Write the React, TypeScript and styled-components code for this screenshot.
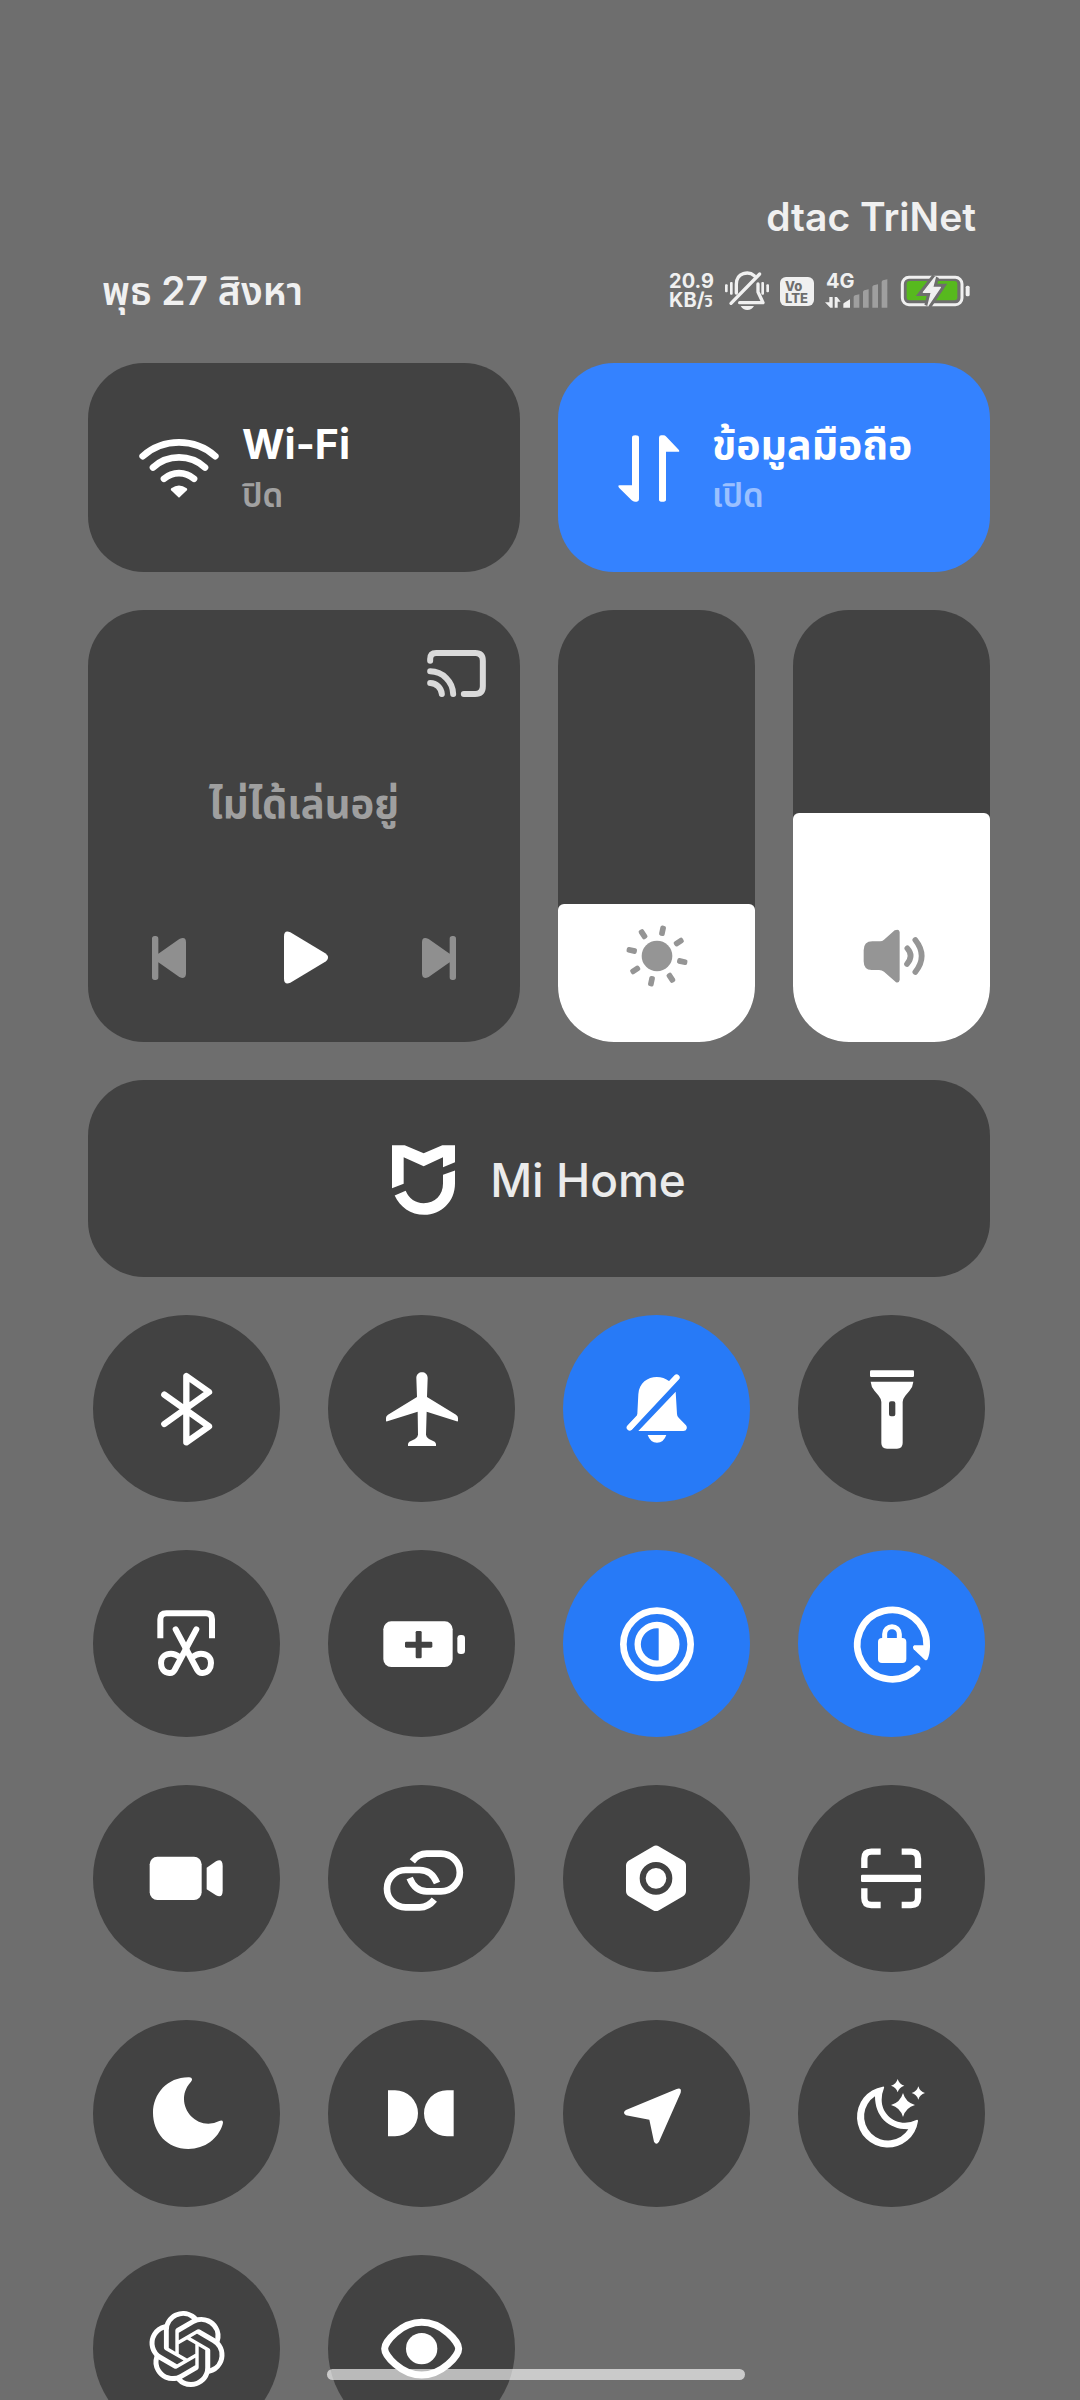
import React, { useState } from "react";
import styled, { createGlobalStyle } from "styled-components";
import { SiOpenai } from "react-icons/si";

const color = {
  page: "#6e6e6e",
  card: "#424242",
  cardOn: "#3482ff",
  tileOn: "#277af7",
  status: "#f0f0f0",
  muted: "#9f9f9f",
  slider: "#959595",
};

const GlobalStyle = createGlobalStyle`
  * { box-sizing: border-box; }
  body { margin: 0; background: ${color.page}; }
  button { font: inherit; color: inherit; border: 0; padding: 0; margin: 0; background: none; cursor: pointer; }
  svg { display: block; flex: none; overflow: visible; }
`;

const Page = styled.div`
  height: 100vh;
  overflow: hidden;
  padding: 193px 90px 0 88px;
  background: ${color.page};
  color: #fff;
  font-family: Inter, "Noto Sans Thai", "Noto Sans", sans-serif;
`;

const Header = styled.header`
  display: flex;
  flex-direction: column;
  gap: 26px;
  padding: 0 14px;
  margin-bottom: 48px;
  color: ${color.status};
  font-size: 39px;
  line-height: 48px;
  font-weight: 600;
`;

const Carrier = styled.div`
  text-align: right;
`;

const StatusRow = styled.div`
  display: flex;
  justify-content: space-between;
  align-items: center;
`;

const StatusIcons = styled.div`
  display: flex;
  align-items: center;
  gap: 11px;
  padding-right: 6px;
`;

const Speed = styled.div`
  display: flex;
  flex-direction: column;
  font-size: 20px;
  line-height: 19px;
  font-weight: 700;
`;

const SpeedUnit = styled.span`
  font-size: 16px;
  line-height: 16px;
`;

const VoLte = styled.div`
  width: 34px;
  height: 29px;
  padding: 3px 0 0 5px;
  border-radius: 6px;
  background: ${color.status};
  color: ${color.page};
  font-size: 13px;
  line-height: 12px;
  font-weight: 800;
`;

const Signal = styled.div`
  position: relative;
  margin-right: 3px;
`;

const Network = styled.span`
  position: absolute;
  left: 1px;
  top: -3px;
  font-size: 20px;
  line-height: 20px;
  font-weight: 700;
`;

const Panel = styled.main`
  display: grid;
  grid-template-columns: repeat(4, minmax(0, 1fr));
  gap: 38px;
`;

const WideCard = styled.button<{ $on?: boolean }>`
  grid-column: span 2;
  display: flex;
  align-items: center;
  gap: 23px;
  height: 209px;
  padding: 2px 51px 0;
  border-radius: 56px;
  text-align: left;
  background: ${(p) => (p.$on ? color.cardOn : color.card)};
`;

const CardText = styled.span`
  display: flex;
  flex-direction: column;
`;

const CardTitle = styled.span`
  font-size: 41px;
  line-height: 52px;
  font-weight: 700;
`;

const CardState = styled.span`
  font-size: 33px;
  line-height: 50px;
  font-weight: 600;
  opacity: 0.5;
`;

const MediaCard = styled.section`
  grid-column: span 2;
  display: flex;
  flex-direction: column;
  justify-content: space-between;
  height: 432px;
  padding: 40px 34px 58px;
  border-radius: 56px;
  background: ${color.card};
`;

const CastButton = styled.button`
  align-self: flex-end;
`;

const MediaTitle = styled.p`
  margin: 0 0 20px;
  text-align: center;
  color: ${color.muted};
  font-size: 40px;
  line-height: 48px;
  font-weight: 700;
`;

const Controls = styled.div`
  display: flex;
  justify-content: space-between;
  align-items: center;
  padding: 0 30px;
`;

const SliderCard = styled.label`
  position: relative;
  display: flex;
  align-items: flex-end;
  justify-content: center;
  height: 432px;
  padding-bottom: 53px;
  border-radius: 56px;
  overflow: hidden;
  background: ${color.card};
  color: ${color.slider};
`;

const SliderFill = styled.span`
  position: absolute;
  left: 0;
  right: 0;
  bottom: 0;
  border-radius: 6px 6px 0 0;
  background: #fff;
`;

const SliderIcon = styled.svg`
  position: relative;
`;

const SliderInput = styled.input`
  position: absolute;
  inset: 0;
  width: 100%;
  height: 100%;
  margin: 0;
  opacity: 0;
  writing-mode: vertical-lr;
  direction: rtl;
`;

const HomeCard = styled.button`
  grid-column: 1 / -1;
  display: flex;
  align-items: center;
  justify-content: center;
  gap: 35px;
  height: 197px;
  padding-top: 2px;
  border-radius: 56px;
  background: ${color.card};
`;

const HomeLabel = styled.span`
  color: #ebebeb;
  font-size: 46px;
  line-height: 56px;
  font-weight: 500;
`;

const Tiles = styled.div`
  grid-column: 1 / -1;
  display: grid;
  grid-template-columns: repeat(4, minmax(0, 1fr));
  gap: 48px 38px;
  justify-items: center;
`;

const Tile = styled.button<{ $on?: boolean }>`
  display: flex;
  align-items: center;
  justify-content: center;
  width: 187px;
  height: 187px;
  border-radius: 50%;
  background: ${(p) => (p.$on ? color.tileOn : color.card)};
`;

const NavArea = styled.div`
  position: fixed;
  left: 0;
  right: 0;
  bottom: 20px;
  display: flex;
  justify-content: center;
  padding-right: 8px;
`;

const NavHandle = styled.div`
  width: 418px;
  height: 11px;
  border-radius: 6px;
  background: rgba(255, 255, 255, 0.64);
`;

type IconProps = { children: React.ReactNode };

/* Tile glyphs are drawn around the centre of the tile, three units to a pixel. */
const Glyph = ({ children }: IconProps) => (
  <svg width="96" height="96" viewBox="-143 -143 288 288" fill="#fff" aria-hidden="true">
    {children}
  </svg>
);

const line = (width: number, cap: "round" | "butt" = "round") =>
  ({ fill: "none", stroke: "#fff", strokeWidth: width, strokeLinecap: cap, strokeLinejoin: "round" }) as const;

const star = (x: number, y: number, r: number) => {
  const k = r * 0.22;
  return `M${x},${y - r} Q${x + k},${y - k} ${x + r},${y} Q${x + k},${y + k} ${x},${y + r} Q${x - k},${y + k} ${x - r},${y} Q${x - k},${y - k} ${x},${y - r}Z`;
};

const tiles: { name: string; on?: boolean; icon: React.ReactNode }[] = [
  {
    name: "Bluetooth",
    icon: <Glyph><path {...line(19)} d="M-67,46 L67,-50 L-1,-98 V101 L67,53 L-67,-42" /></Glyph>,
  },
  {
    name: "Airplane mode",
    icon: (
      <Glyph>
        <path d="M-16,-92 C-16,-115 18,-115 18,-92 L16,-35 L103,18 Q109,22 109,28 V36 Q109,39 105,38 L15,9 L13,78 Q14,87 22,91 L39,99 Q43,102 43,107 V112 H-41 V107 Q-41,102 -37,99 L-20,91 Q-12,87 -11,78 L-12,9 L-103,38 Q-107,39 -107,36 V28 Q-107,22 -101,18 L-14,-35Z" />
      </Glyph>
    ),
  },
  {
    name: "Silent",
    on: true,
    icon: (
      <Glyph>
        <path d="M38,-82 C5,-108 -52,-94 -55,-43 L-58,15 Q-58,22 -64,28 L-87,51 L-75,63 L60,-94Z M57,-51 L61,16 Q61,22 66,27 L88,50 Q92,56 90,60 Q88,67 80,67 H-55Z M-27,79 H29 Q21,102 1,102 Q-19,102 -27,79Z" />
        <path {...line(18)} d="M60,-94 L-81,57" />
      </Glyph>
    ),
  },
  {
    name: "Flashlight",
    icon: (
      <Glyph>
        <rect x="-65" y="-115" width="132" height="20" rx="4" />
        <path
          fillRule="evenodd"
          d="M-63,-81 H65 Q64,-66 53,-53 L41,-39 Q33,-29 33,-20 V103 Q33,120 16,120 H-14 Q-31,120 -31,103 V-20 Q-31,-29 -39,-39 L-51,-53 Q-62,-66 -63,-81Z M-8,-16 V17 Q-8,23 -2,23 H5 Q11,23 11,17 V-16 Q11,-22 5,-22 H-2 Q-8,-22 -8,-16Z"
        />
      </Glyph>
    ),
  },
  {
    name: "Screenshot",
    icon: (
      <Glyph>
        <path {...line(18, "butt")} d="M-79,-16 V-73 Q-79,-91 -61,-91 H58 Q76,-91 76,-73 V-16" />
        <path {...line(18)} d="M29,-43 L-36,79 Q-41,89 -52,88 C-68,87 -77,74 -77,58 C-77,40 -63,30 -47,30 Q-34,30 -22,40" />
        <path {...line(18)} d="M-33,-43 L32,79 Q37,89 48,88 C64,87 73,74 73,58 C73,40 59,30 43,30 Q30,30 18,40" />
      </Glyph>
    ),
  },
  {
    name: "Battery saver",
    icon: (
      <Glyph>
        <rect x="-115" y="-67" width="208" height="137" rx="24" />
        <rect x="107" y="-26" width="23" height="57" rx="10" />
        <rect x="-50" y="-6" width="82" height="18" rx="4" fill={color.card} />
        <rect x="-18" y="-38" width="18" height="82" rx="4" fill={color.card} />
      </Glyph>
    ),
  },
  {
    name: "Dark mode",
    on: true,
    icon: (
      <Glyph>
        <circle {...line(20)} cx="1" cy="2" r="101" />
        <circle {...line(19)} cx="1" cy="2" r="58" />
        <path d="M6,-58 A60,60 0 0 1 6,62Z" />
      </Glyph>
    ),
  },
  {
    name: "Rotation lock",
    on: true,
    icon: (
      <Glyph>
        <path {...line(20)} d="M76,75 A104,104 0 1 1 105,6" />
        <path d="M68,5 H115 Q115,30 108,46 Q105,52 99,48 L66,17 Q61,8 68,5Z" />
        <rect x="-41" y="-17" width="85" height="75" rx="12" />
        <path {...line(15)} d="M-21,-15 V-29 A22,22 0 0 1 23,-29 V-15" />
      </Glyph>
    ),
  },
  {
    name: "Screen recorder",
    icon: (
      <Glyph>
        <rect x="-111" y="-66" width="156" height="130" rx="23" />
        <path d="M60,-33 L88,-52 Q108,-62 108,-38 V36 Q108,60 88,50 L60,32Z" />
      </Glyph>
    ),
  },
  {
    name: "Connectivity",
    icon: (
      <Glyph>
        <path {...line(20, "butt")} d="M-28,-52 Q-10,-75 15,-75 H58 A56,56 0 0 1 58,38 H15 Q-20,38 -36,-2" />
        <path {...line(20, "butt")} d="M46,13 Q30,-26 -6,-26 H-48 A56,56 0 0 0 -48,86 H-6 Q20,86 38,63" />
      </Glyph>
    ),
  },
  {
    name: "Settings",
    icon: (
      <Glyph>
        <path {...line(36)} fill="#fff" d="M-2,-81 L70,-39 V37 L-2,79 L-74,37 V-39Z" />
        <circle cx="-2" cy="-1" r="40" fill="#fff" stroke={color.card} strokeWidth="18" />
      </Glyph>
    ),
  },
  {
    name: "Scanner",
    icon: (
      <Glyph>
        <path
          {...line(19, "butt")}
          d="M-82,-32 V-60 Q-82,-81 -61,-81 H-33 M30,-81 H58 Q79,-81 79,-60 V-32 M79,29 V58 Q79,79 58,79 H30 M-33,79 H-61 Q-82,79 -82,58 V29"
        />
        <rect x="-92" y="-12" width="180" height="22" rx="4" />
      </Glyph>
    ),
  },
  {
    name: "Do not disturb",
    icon: (
      <Glyph>
        <path d="M5,-109 Q15,-110 16,-104 Q17,-100 13,-96 C-5,-77 -8,-57 -8,-44 C-8,-5 25,30 65,30 Q83,30 98,22 Q107,18 109,25 Q109,28 108,32 C95,75 55,106 5,106 C-60,106 -101,55 -101,-2 C-101,-60 -58,-109 5,-109Z" />
      </Glyph>
    ),
  },
  {
    name: "Dolby Atmos",
    icon: <Glyph><path d="M-101,-70 H-80 A69,69 0 0 1 -80,68 H-101Z M96,-70 H76 A69,69 0 0 0 76,68 H96Z" /></Glyph>,
  },
  {
    name: "Location",
    icon: <Glyph><path d="M60,-74 Q76,-79 72,-63 L7,84 Q-1,96 -8,84 L-22,18 L-92,5 Q-104,-3 -92,-11Z" /></Glyph>,
  },
  {
    name: "Reading mode",
    icon: (
      <Glyph>
        <path
          fillRule="evenodd"
          d="M-27,-81 Q-21,-83 -23,-77 Q-30,-60 -30,-42 C-30,-4 0,27 40,27 Q58,27 74,19 Q80,17 79,23 A92,92 0 1 1 -27,-81Z M-50,-52 A72,72 0 1 0 50,47 C-10,48 -50,8 -50,-52Z"
        />
        <path d={star(18, -84, 20)} />
        <path d={star(80, -62, 20)} />
        <path d={star(34, -26, 36)} />
      </Glyph>
    ),
  },
  { name: "ChatGPT", icon: <SiOpenai size={76} color="#fff" aria-hidden="true" /> },
  {
    name: "Eye comfort",
    icon: (
      <Glyph>
        <path {...line(21)} d="M-111,0 C-111,-20 -62,-79 0,-79 C62,-79 111,-20 111,0 C111,20 62,79 0,79 C-62,79 -111,20 -111,0Z" />
        <circle cx="0" cy="0" r="47" />
      </Glyph>
    ),
  },
];

const MutedBell = () => (
  <svg width="44" height="38" viewBox="258 275 132 114" fill={color.status} aria-hidden="true">
    <rect x="258" y="312" width="8" height="24" rx="3" />
    <rect x="273" y="305" width="8" height="38" rx="3" />
    <rect x="367" y="305" width="8" height="38" rx="3" />
    <rect x="382" y="312" width="8" height="24" rx="3" />
    <path d="M305,377 H345 Q338,389 325,389 Q312,389 305,377Z" />
    <g fill="none" stroke={color.status} strokeWidth="10" strokeLinecap="round" strokeLinejoin="round">
      <path d="M362,281 L276,369" />
      <path d="M292,338 V312 C292,275 330,272 346,286" />
      <path d="M357,311 V335 L372,367 H302" />
    </g>
  </svg>
);

const SignalBars = () => (
  <svg width="62" height="34" viewBox="554 274 186 102" fill={color.muted} aria-hidden="true">
    <path
      fill={color.status}
      d="M567,343 H577 V375 H570 L554,359 H567Z M583,375 V343 H590 L601,357 H592 V375Z M609,375 V364 Q609,361 612,360 L629,350 V375Z"
    />
    <path d="M640,375 V343 Q640,340 644,338 L657,335 V375Z M668,375 V328 Q668,325 672,323 L685,320 V375Z M696,375 V313 Q696,310 700,308 L713,305 V375Z M724,375 V298 Q724,295 728,293 L741,290 V375Z" />
  </svg>
);

const boltShape = "M887,288 L851,334 H875 L865,374 L902,319 H879Z";

const Battery = () => (
  <svg width="69" height="30" viewBox="784 285 207 90" aria-hidden="true">
    <rect x="788" y="289" width="179" height="82" rx="20" fill="none" stroke={color.status} strokeWidth="9" />
    <rect x="978" y="314" width="12" height="32" rx="5" fill={color.status} />
    <rect x="801" y="300" width="152" height="58" rx="9" fill="#57b91e" />
    <path d={boltShape} fill={color.page} stroke={color.page} strokeWidth="22" />
    <path d={boltShape} fill={color.status} stroke={color.status} strokeWidth="4" strokeLinejoin="round" />
  </svg>
);

const WifiIcon = () => (
  <svg width="80" height="59" viewBox="0 0 240 176" aria-hidden="true">
    <path {...line(20)} d="M11,51 A165,165 0 0 1 229,51 M42,85 A116,116 0 0 1 198,85 M75,119 A68,68 0 0 1 165,119" />
    <path fill="#fff" d="M97,147 Q120,131 143,147 Q147,150 143,154 L120,176 L97,154 Q93,150 97,147Z" />
  </svg>
);

const DataIcon = () => (
  <svg width="80" height="67" viewBox="207 253 240 201" fill="#fff" aria-hidden="true">
    <path d="M276,261 Q276,254 286,254 Q297,254 297,261 V446 Q297,453 290,453 H285 Q279,453 275,449 L237,411 Q232,404 239,404 H276Z" />
    <path d="M357,447 V261 Q357,254 364,254 H370 Q375,254 379,258 L416,297 Q421,303 414,303 H378 V447 Q378,453 367,453 Q357,453 357,447Z" />
  </svg>
);

const CastIcon = () => (
  <svg width="59" height="47" viewBox="1042 150 176 141" fill="none" stroke="#dadada" strokeWidth="18" strokeLinecap="round" aria-hidden="true">
    <path d="M1051,182 V177 Q1051,159 1069,159 H1186 Q1209,159 1209,182 V259 Q1209,282 1186,282 H1152" />
    <path d="M1051,214 A70,70 0 0 1 1120,282 M1051,249 A36,36 0 0 1 1086,282" />
  </svg>
);

const PreviousIcon = () => (
  <svg width="34" height="44" viewBox="216 1005 102 132" fill="#8f8f8f" aria-hidden="true">
    <path d="M224,1005 H227 Q235,1005 235,1013 V1058 L298,1014 Q318,1005 318,1024 V1117 Q318,1137 298,1128 L235,1084 V1129 Q235,1137 227,1137 H224 Q216,1137 216,1129 V1013 Q216,1005 224,1005Z" />
  </svg>
);

const NextIcon = () => (
  <svg width="34" height="44" viewBox="0 0 102 132" fill="#8f8f8f" aria-hidden="true">
    <path d="M94,0 H91 Q83,0 83,8 V53 L20,9 Q0,0 0,19 V112 Q0,132 20,123 L83,79 V124 Q83,132 91,132 H94 Q102,132 102,124 V8 Q102,0 94,0Z" />
  </svg>
);

const PlayIcon = () => (
  <svg width="48" height="53" viewBox="600 992 144 158" fill="#fff" aria-hidden="true">
    <path d="M612,1008 Q612,987 631,995 L737,1059 Q751,1071 737,1083 L631,1147 Q612,1155 612,1134Z" />
  </svg>
);

const HomeLogo = () => (
  <svg width="63" height="70" viewBox="99 75 189 209" fill="#fff" aria-hidden="true">
    <path d="M99,75 H137 L194,99 L250,75 H288 V126 L252,141 V111 L194,138 L134,111 V191 L99,204Z" />
    <path d="M107,226 L140,212 Q156,249 194,249 C228,249 252,225 252,190 V164 L288,151 V190 C288,245 246,284 196,284 C155,284 122,260 107,226Z" />
  </svg>
);

const rays = [12, 57, 102, 147, 192, 237, 282, 327];

const SunIcon = () => (
  <SliderIcon width="66" height="66" viewBox="-99 -99 198 198" fill="currentColor" aria-hidden="true">
    <circle r="46" />
    {rays.map((angle) => (
      <rect key={angle} x="-8" y="-93" width="17" height="31" rx="6" transform={`rotate(${angle})`} />
    ))}
  </SliderIcon>
);

const SpeakerIcon = () => (
  <SliderIcon width="66" height="66" viewBox="925 430 198 198" fill="currentColor" aria-hidden="true">
    <path d="M1047,457 V601 Q1045,611 1036,608 L1000,576 Q994,571 985,571 H963 Q939,571 939,545 V512 Q939,485 965,485 H988 Q995,485 1000,480 L1032,452 Q1045,446 1047,457Z" />
    <path
      fill="none"
      stroke="currentColor"
      strokeWidth="17"
      strokeLinecap="round"
      d="M1070,506 Q1090,528 1069,553 M1094,481 Q1132,529 1094,577"
    />
  </SliderIcon>
);

type SliderProps = { label: string; initial: number; children: React.ReactNode };

const Slider = ({ label, initial, children }: SliderProps) => {
  const [value, setValue] = useState(initial);
  return (
    <SliderCard>
      <SliderFill style={{ height: `${value}%` }} />
      {children}
      <SliderInput
        type="range"
        min="0"
        max="100"
        aria-label={label}
        value={value}
        onChange={(e) => setValue(Number(e.target.value))}
      />
    </SliderCard>
  );
};

export default function App() {
  return (
    <Page lang="th">
      <GlobalStyle />
      <Header>
        <Carrier>dtac TriNet</Carrier>
        <StatusRow>
          <span>พุธ 27 สิงหา</span>
          <StatusIcons>
            <Speed>
              <span>20.9</span>
              <span>
                KB/<SpeedUnit>วิ</SpeedUnit>
              </span>
            </Speed>
            <MutedBell />
            <VoLte>
              <div>Vo</div>
              <div>LTE</div>
            </VoLte>
            <Signal>
              <SignalBars />
              <Network>4G</Network>
            </Signal>
            <Battery />
          </StatusIcons>
        </StatusRow>
      </Header>
      <Panel>
        <WideCard type="button">
          <WifiIcon />
          <CardText>
            <CardTitle>Wi-Fi</CardTitle>
            <CardState>ปิด</CardState>
          </CardText>
        </WideCard>
        <WideCard type="button" $on>
          <DataIcon />
          <CardText>
            <CardTitle>ข้อมูลมือถือ</CardTitle>
            <CardState>เปิด</CardState>
          </CardText>
        </WideCard>
        <MediaCard>
          <CastButton type="button" aria-label="Cast"><CastIcon /></CastButton>
          <MediaTitle>ไม่ได้เล่นอยู่</MediaTitle>
          <Controls>
            <button type="button" aria-label="Previous"><PreviousIcon /></button>
            <button type="button" aria-label="Play"><PlayIcon /></button>
            <button type="button" aria-label="Next"><NextIcon /></button>
          </Controls>
        </MediaCard>
        <Slider label="Brightness" initial={32}><SunIcon /></Slider>
        <Slider label="Volume" initial={53}><SpeakerIcon /></Slider>
        <HomeCard type="button">
          <HomeLogo />
          <HomeLabel>Mi Home</HomeLabel>
        </HomeCard>
        <Tiles>
          {tiles.map((tile) => (
            <Tile key={tile.name} type="button" aria-label={tile.name} $on={tile.on}>
              {tile.icon}
            </Tile>
          ))}
        </Tiles>
      </Panel>
      <NavArea>
        <NavHandle />
      </NavArea>
    </Page>
  );
}
